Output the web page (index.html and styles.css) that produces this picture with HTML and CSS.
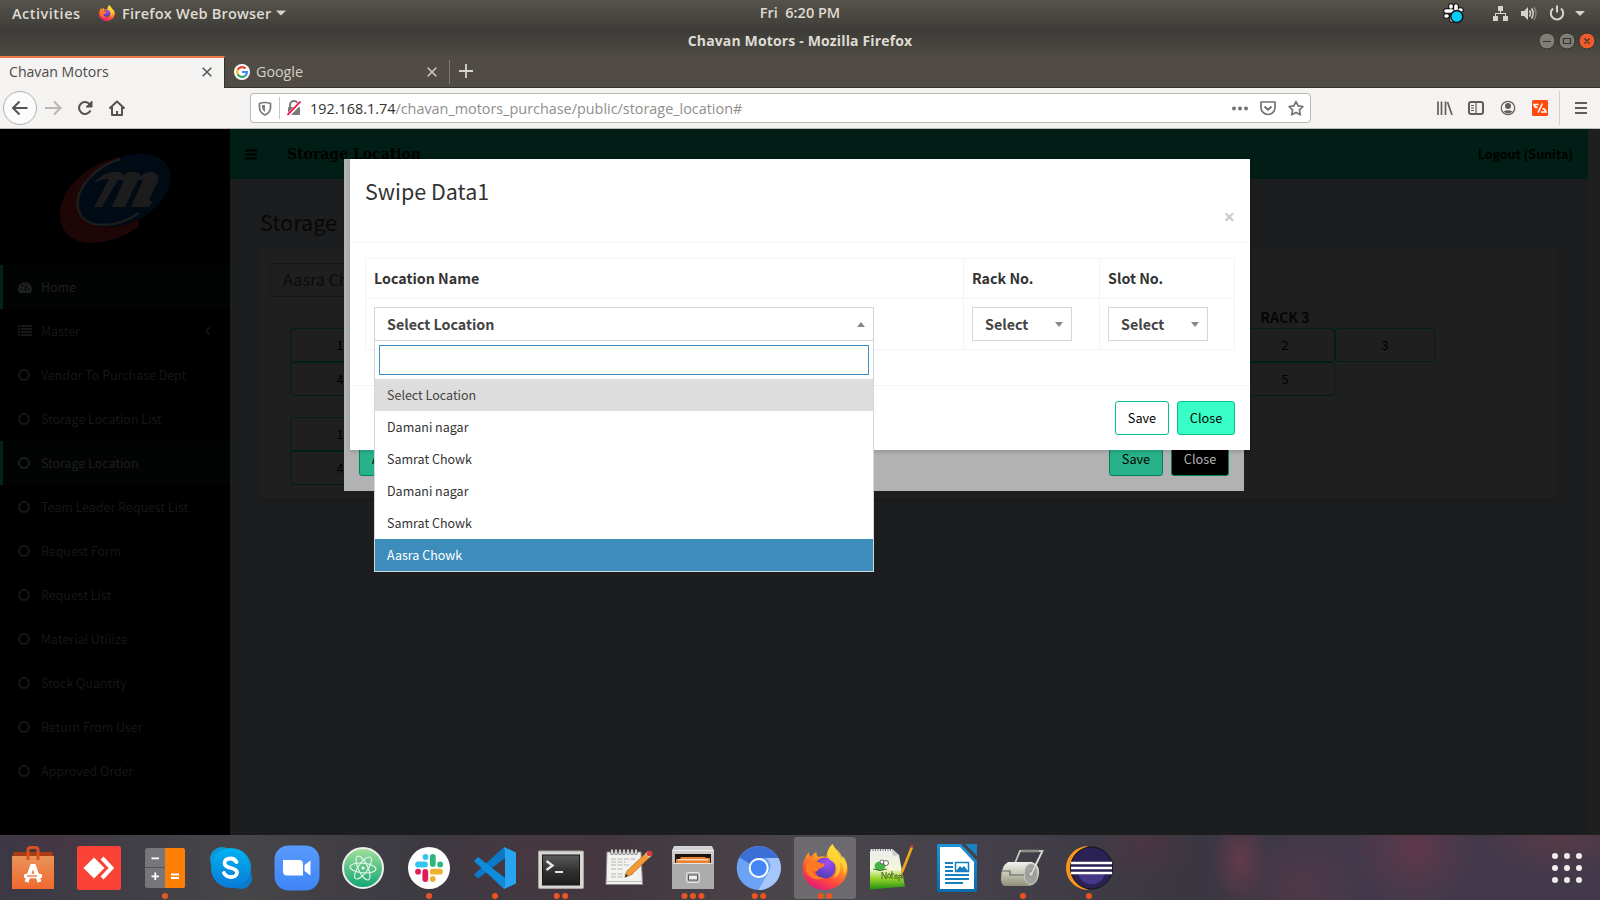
FILE: index.html
```html
<!DOCTYPE html>
<html lang="en">
<head>
<meta charset="utf-8">
<title>Chavan Motors</title>
<link rel="stylesheet" href="styles.css">
</head>
<body>
<svg class="defs" width="0" height="0">
  <defs>
    <linearGradient id="fx" x1=".8" y1="0" x2=".3" y2="1"><stop offset="0" stop-color="#fff04a"/><stop offset=".4" stop-color="#ff9a1f"/><stop offset=".72" stop-color="#ff4a3c"/><stop offset="1" stop-color="#e0177d"/></linearGradient>
    <radialGradient id="fxp" cx=".6" cy=".25" r=".8"><stop offset="0" stop-color="#a44af5"/><stop offset="1" stop-color="#4a3fb0"/></radialGradient>
    <linearGradient id="bag" x1="0" y1="0" x2="0" y2="1"><stop offset="0" stop-color="#e8935a"/><stop offset="1" stop-color="#f0692d"/></linearGradient>
    <linearGradient id="sky" x1="0" y1="0" x2="0" y2="1"><stop offset="0" stop-color="#00b4f0"/><stop offset="1" stop-color="#0a7ad8"/></linearGradient>
    <linearGradient id="zoomg" x1="0" y1="0" x2="0" y2="1"><stop offset="0" stop-color="#589bfd"/><stop offset="1" stop-color="#3f85f5"/></linearGradient>
    <linearGradient id="atom" x1="0" y1="0" x2="0" y2="1"><stop offset="0" stop-color="#a3e09b"/><stop offset="1" stop-color="#0fa573"/></linearGradient>
    <linearGradient id="term" x1="0" y1="0" x2="0" y2="1"><stop offset="0" stop-color="#5a5a5a"/><stop offset=".5" stop-color="#333"/><stop offset="1" stop-color="#1d1d1d"/></linearGradient>
    <linearGradient id="metal" x1="0" y1="0" x2="0" y2="1"><stop offset="0" stop-color="#d6d6d6"/><stop offset="1" stop-color="#9c9c9c"/></linearGradient>
    <linearGradient id="grass" x1="0" y1="0" x2="0" y2="1"><stop offset="0" stop-color="#e9ecef"/><stop offset=".5" stop-color="#f4f7d8"/><stop offset=".72" stop-color="#9bd52c"/><stop offset="1" stop-color="#1f8f12"/></linearGradient>
    <linearGradient id="wri" x1="0" y1="0" x2="0" y2="1"><stop offset="0" stop-color="#1f93d6"/><stop offset="1" stop-color="#0a6cab"/></linearGradient>
    <linearGradient id="roll" x1="0" y1="0" x2="0" y2="1"><stop offset="0" stop-color="#f2f2ee"/><stop offset=".5" stop-color="#c3c4b4"/><stop offset="1" stop-color="#8d8f78"/></linearGradient>
    <symbol id="firefox" viewBox="0 0 46 46">
      <path d="M30 0c-4 4-6 8-6 13-3-1-6-1-8 0-2-1-2-3-2-5-3 1-4 3-5 5C7 12 6 10 6.500 8 3 12 0 18 0 25c0 12 10 21 22 21s23-9 23-21c0-5-2-10-5-13 0 2 0 3-1 4C37 9 32 5 30 0z" fill="url(#fx)"/>
      <circle cx="22.500" cy="24" r="10.500" fill="url(#fxp)"/>
      <path d="M5 18c4-2 10-1 13 1 2 1 4 0 4 1 0 3-4 4-6 5-1 3-3 3-6 2 2 5 8 7 12 7-8 4-18-1-19-9 0-3 1-5 2-7z" fill="#ff7a22"/>
      <path d="M30 0c-6 6-7 14-1 17 7 4 6 12 2 17 7-3 9-12 5-17 4 3 6 8 5 14 6-8 3-15-2-19-1-5-7-7-9-12z" fill="#ffd93a" opacity=".75"/>
    </symbol>
    <symbol id="ring" viewBox="0 0 14 14"><circle cx="6" cy="7" r="5" fill="none" stroke="currentColor" stroke-width="2"/></symbol>
  </defs>
</svg>

<div class="screen">
  <header class="topbar">
    <div class="top-left">
      <span class="activities">Activities</span>
      <svg class="fxmini" viewBox="0 0 46 46"><use href="#firefox"/></svg>
      <span class="appname">Firefox Web Browser</span>
      <svg width="10" height="6"><path d="M0 .5h10L5 5.500z" fill="#d5d3cd"/></svg>
    </div>
    <div class="clock">Fri&nbsp; 6:20 PM</div>
    <svg class="tray" width="160" height="28" viewBox="1440 0 160 28">
      <g stroke="#111" stroke-width="5.500" stroke-linecap="round"><path d="M1451 6v1M1456 6v5M1446 11h6M1446 16h1M1452 16v4M1460 10h1"/></g>
      <g stroke="#fff" stroke-width="3.600" stroke-linecap="round"><path d="M1451 6v1M1456 6v5M1446 11h6M1446 16h1M1452 16v4M1460 10h1"/></g>
      <circle cx="1456.800" cy="16.500" r="6" fill="#00cdf5" stroke="#111" stroke-width="1.500"/>
      <g fill="#d5d3cd"><path d="M1498 6h5v5h-5zM1493 16h5v5h-5zM1503 16h5v5h-5z"/><path d="M1500 11h1v2h5v3h-1v-2h-9v2h-1v-3h5z"/>
      <path d="M1521 11h3l4-4v13l-4-4h-3z"/><path d="M1575 11h10l-5 5z"/></g>
      <g fill="none" stroke="#d5d3cd" stroke-width="1.600"><path d="M1529.500 10.500q2 3 0 6M1531.500 8.500q3.500 5 0 10"/><path d="M1534 7q4 6.500 0 13" opacity=".4"/><path d="M1553 8.500a6.200 6.200 0 1 0 8 0" stroke-width="2"/><path d="M1557 5.500v7" stroke-width="2"/></g>
    </svg>
  </header>

  <div class="titlebar">
    <span class="title">Chavan Motors - Mozilla Firefox</span>
    <svg class="winbtns" width="60" height="20" viewBox="1538 31 60 20">
      <g stroke="#35332e" stroke-width="1"><circle cx="1547" cy="41" r="8" fill="#7f7d76"/><circle cx="1567" cy="41" r="8" fill="#7f7d76"/><circle cx="1587" cy="41" r="8" fill="#ec5b2e"/></g>
      <path d="M1543 41.500h8M1563.500 38.500h7v5h-7zM1584.500 38.500l5 5m0-5l-5 5" fill="none" stroke="#35332e" stroke-width="1.200"/>
    </svg>
  </div>

  <div class="tabs">
    <div class="tab active"><span>Chavan Motors</span><svg width="10" height="10"><path d="M.7.7l8.600 8.600M9.300.7L.7 9.300" stroke="#555" stroke-width="1.500"/></svg></div>
    <div class="tab">
      <svg width="16" height="16" viewBox="0 0 16 16"><circle cx="8" cy="8" r="8" fill="#fff"/><g fill="none" stroke-width="2.200"><path d="M11.600 4.600A4.900 4.900 0 0 0 3.700 5.700" stroke="#ea4335"/><path d="M3.700 5.700a5 5 0 0 0 0 4.600" stroke="#fbbc05"/><path d="M3.700 10.300a4.900 4.900 0 0 0 7.400 1.500" stroke="#34a853"/><path d="M11.100 11.800A5 5 0 0 0 12.900 8H8" stroke="#4285f4"/></g></svg>
      <span class="grow">Google</span><svg width="10" height="10"><path d="M.7.7l8.600 8.600M9.300.7L.7 9.300" stroke="#cfccc4" stroke-width="1.500"/></svg></div>
    <div class="newtab"><svg width="14" height="14"><path d="M7 0v14M0 7h14" stroke="#d8d5ce" stroke-width="1.800"/></svg></div>
  </div>

  <div class="toolbar">
    <svg class="nav" width="140" height="40" viewBox="0 88 140 40">
      <circle cx="20" cy="108" r="16.500" fill="#fcfcfc" stroke="#b2afab"/>
      <g fill="none" stroke="#555350" stroke-width="2"><path d="M27.500 108h-14M19.500 101.500l-6.500 6.500 6.500 6.500"/><path d="M45 108h14M54 101.500l6.500 6.500-6.500 6.500" stroke="#b9b7b4"/><path d="M90 104.500a6 6 0 1 0 .5 6" /><path d="M92 101v6h-6z" fill="#555350" stroke-width="1"/><path d="M109.500 108.500l7.500-7 7.500 7M112 107v8h10v-8M117 115v-4" stroke-linejoin="round"/></g>
    </svg>
    <div class="urlbar">
      <svg width="52" height="28" viewBox="251 94 52 28"><path d="M259.500 103.500q5.500-2 11 0v4q0 5-5.500 7.500-5.500-2.500-5.500-7.500z" fill="none" stroke="#7c7a78" stroke-width="1.700"/><path d="M265 105v7q-3-2-3-5v-2z" fill="#7c7a78"/><path d="M279.500 97v22" stroke="#c9c7c5"/><path d="M290 107v-2a4 4 0 0 1 8 0v2" fill="none" stroke="#7c7a78" stroke-width="2"/><rect x="288" y="107" width="12" height="8" rx="1" fill="#7c7a78"/><path d="M288 115.500L301 102" stroke="#fff" stroke-width="3.500"/><path d="M287.500 115L300.500 101.500" stroke="#ff0039" stroke-width="1.800"/></svg>
      <span class="url"><b>192.168.1.74</b><i>/chavan_motors_purchase/public/storage_location#</i></span>
      <svg class="urlicons" width="80" height="28" viewBox="1228 94 80 28"><g fill="#757370"><circle cx="1234" cy="108.500" r="2"/><circle cx="1240" cy="108.500" r="2"/><circle cx="1246" cy="108.500" r="2"/></g><g fill="none" stroke="#757370" stroke-width="1.700" stroke-linejoin="round"><path d="M1261 102h14v5.500a7 7 0 0 1-14 0z"/><path d="M1264.500 106.500l3.500 3.300 3.500-3.300" stroke-width="2"/><path d="M1296 101.500l2.100 4.400 4.900.6-3.600 3.400.9 4.900-4.300-2.400-4.300 2.400.9-4.900-3.600-3.400 4.900-.6z"/></g></svg>
    </div>
    <svg class="tools" width="170" height="40" viewBox="1430 88 170 40"><g fill="none" stroke="#605e5b" stroke-width="2"><path d="M1438 101.500v13.500M1441.500 101.500v13.500M1445.500 101.500v13.500M1447.500 102l4.500 13" stroke-width="1.700"/><rect x="1469" y="102" width="14" height="12" rx="2"/><path d="M1476 102v12M1471 105.500h3M1471 108h3M1471 110.500h3" stroke-width="1.200"/><circle cx="1508" cy="108" r="6.700" stroke-width="1.200"/><path d="M1575 103h12M1575 108h12M1575 113h12"/></g><circle cx="1508" cy="106" r="3" fill="#605e5b"/><path d="M1503.500 111.500q4.500-2.500 9 0-4.500 4-9 0z" fill="#605e5b"/><rect x="1532" y="100" width="16" height="16" rx="1.500" fill="#ff4a0d"/><path d="M1538.500 104.500h-4.500q.5 3 3.500 3M1542.500 103.500l-4.500 9M1541 112h5q-.5-3-3.500-3.500" fill="none" stroke="#fff" stroke-width="1.600"/><path d="M1559.500 91v34" stroke="#d3d1cf"/></svg>
  </div>

  <main class="page">
    <aside class="sidebar">
      <svg class="logo" width="230" height="136" viewBox="0 129 230 136">
        <path d="M120 157C90 162 60 188 60 214c0 20 15 30 34 29 18-1 36-9 45-17v-12c-15 13-44 20-55 4-11-19 8-49 36-56z" fill="#1e0506"/>
        <ellipse cx="125" cy="190.500" rx="49" ry="32" transform="rotate(-29 125 190.500)" fill="#000b16"/>
        <path d="M120 159c-27 8-46 32-42 50 5 20 36 21 61 4" fill="none" stroke="#1c1c1c" stroke-width="2.500"/>
        <path d="M94 183q8-10 19-11 9-2 10 4 6-5 12-4 6 1 5 5 5-5 11-5 9 1 7 9l-9 18q0 3 4 2l-4 6h-18l12-27h-5l-13 27h-13l12-27h-6l-16 27H94l15-28q-8 0-15 4z" fill="#1c1c1c"/>
      </svg>
      <nav>
        <a class="on"><svg viewBox="0 0 14 14"><path d="M1.200 13a7 7 0 1 1 11.600 0z" fill="currentColor"/><path d="M7 10.500l1.500-5M2.500 9h1M10.500 9h1M3.700 5l1 1M7 3v1" stroke="#000" stroke-width="1.300"/></svg><span>Home</span></a>
        <a><svg viewBox="0 0 14 14"><path d="M0 2h2M3 2H14M0 5h2M3 5H14M0 8h2M3 8H14M0 11h2M3 11H14" stroke="currentColor" stroke-width="2"/></svg><span>Master</span><svg class="chev" viewBox="0 0 6 10"><path d="M5 1L1 5l4 4" fill="none" stroke="currentColor" stroke-width="1.300"/></svg></a>
        <a><svg><use href="#ring"/></svg><span>Vendor To Purchase Dept</span></a>
        <a><svg><use href="#ring"/></svg><span>Storage Location List</span></a>
        <a class="on"><svg><use href="#ring"/></svg><span>Storage Location</span></a>
        <a><svg><use href="#ring"/></svg><span>Team Leader Request List</span></a>
        <a><svg><use href="#ring"/></svg><span>Request Form</span></a>
        <a><svg><use href="#ring"/></svg><span>Request List</span></a>
        <a><svg><use href="#ring"/></svg><span>Material Utilize</span></a>
        <a><svg><use href="#ring"/></svg><span>Stock Quantity</span></a>
        <a><svg><use href="#ring"/></svg><span>Return From User</span></a>
        <a><svg><use href="#ring"/></svg><span>Approved Order</span></a>
      </nav>
    </aside>
    <section class="main">
      <div class="appbar"><svg width="12" height="11"><path d="M0 1.500h12M0 5.500h12M0 9.500h12" stroke="#000" stroke-width="2"/></svg><span class="crumb">Storage Location</span><span class="logout">Logout (Sunita)</span></div>
      <h1>Storage Location</h1>
      <div class="box">
        <div class="locsel">Aasra Chowk</div>
        <div class="racks">
          <div class="rack first">
            <div class="rackname">&nbsp;</div>
            <div class="cells"><span>1</span></div><div class="cells"><span>4</span></div>
            <div class="cells gap"><span>1</span></div><div class="cells"><span>4</span></div>
          </div>
          <div class="rack">
            <div class="rackname">RACK 3</div>
            <div class="cells"><span>2</span><span>3</span></div><div class="cells"><span>5</span></div>
          </div>
        </div>
      </div>
    </section>

    <div class="modal back">
      <div class="bfoot"><button class="btn green add">A</button><span class="grow"></span><button class="btn green save">Save</button><button class="btn black">Close</button></div>
    </div>
    <div class="modal front">
      <div class="mhead"><h2>Swipe Data1</h2><span class="x">×</span></div>
      <div class="mbody">
        <div class="table">
          <div class="th">Location Name</div><div class="th">Rack No.</div><div class="th">Slot No.</div>
          <div class="td"><div class="select wide"><span>Select Location</span><i class="up"></i></div></div>
          <div class="td"><div class="select"><span>Select</span><i></i></div></div>
          <div class="td"><div class="select"><span>Select</span><i></i></div></div>
        </div>
      </div>
      <div class="mfoot"><button class="btn white save">Save</button><button class="btn mint">Close</button></div>
      <div class="dropdown">
        <div class="search"></div>
        <div class="opt selected">Select Location</div>
        <div class="opt">Damani nagar</div>
        <div class="opt">Samrat Chowk</div>
        <div class="opt">Damani nagar</div>
        <div class="opt">Samrat Chowk</div>
        <div class="opt hl">Aasra Chowk</div>
      </div>
    </div>
  </main>

  <footer class="dock">
    <svg viewBox="0 0 66 65"><path d="M14 17h38l2 5H12z" fill="#a83c12"/><path d="M12 21h42v33H12z" fill="url(#bag)"/><path d="M28 25V15q0-2.500 3-2.500h4q3 0 3 2.500v10" fill="none" stroke="#d9511f" stroke-width="3"/><path d="M26.500 47L32 31h2l5.500 16" fill="none" stroke="#fff" stroke-width="4"/><path d="M26 41h14" stroke="#fff" stroke-width="4.500" stroke-linecap="round"/><path d="M27 41h10" stroke="#f0692d" stroke-width="1.300"/></svg>
    <svg viewBox="0 0 66 65"><rect x="11" y="11" width="44" height="44" rx="2.500" fill="#fb4237"/><path d="M17.500 33L28 22.500 38.500 33 28 43.500z" fill="#fff"/><path d="M36 23l9.500 10L36 43" fill="none" stroke="#fff" stroke-width="4"/></svg>
    <svg viewBox="0 0 66 65"><rect x="13" y="13" width="40" height="40" rx="2.500" fill="#77777a"/><path d="M33 13h17.500a2.500 2.500 0 0 1 2.500 2.500v35a2.500 2.500 0 0 1-2.500 2.500H33z" fill="#ff7f05"/><path d="M13 32.500h20" stroke="#55555a"/><path d="M19.500 23.300h7.500M19.500 41.300h7.500M23.300 37.500v7.500M39 39.500h8M39 43h8" stroke="#fff" stroke-width="1.800"/><circle cx="33" cy="61" r="3" fill="#e95420"/></svg>
    <svg viewBox="0 0 66 65"><circle cx="24" cy="24" r="12" fill="#0c96d8"/><circle cx="43" cy="43" r="11" fill="#0a7cc9"/><circle cx="33" cy="33" r="20" fill="url(#sky)"/><path d="M38.500 27q-2-3.500-6-3.500c-4 0-6 2-6 4.500 0 6.500 12.500 3.500 12.500 9.500 0 3-3 4.500-6 4.500q-5 0-7-4" fill="none" stroke="#fff" stroke-width="3.800" stroke-linecap="round"/></svg>
    <svg viewBox="0 0 66 65"><rect x="10.500" y="10.500" width="45" height="45" rx="14" fill="url(#zoomg)"/><path d="M19 25h16q4 0 4 4v11.500H23q-4 0-4-4zM40.500 30l6-4.500v15l-6-4.500z" fill="#fff"/></svg>
    <svg viewBox="0 0 66 65"><circle cx="33" cy="33" r="20" fill="url(#atom)" stroke="#efefef" stroke-width="2"/><g fill="none" stroke="#e9f7ee" stroke-width="1.100"><ellipse cx="33" cy="33" rx="13" ry="4.800" transform="rotate(5 33 33)"/><ellipse cx="33" cy="33" rx="13" ry="4.800" transform="rotate(65 33 33)"/><ellipse cx="33" cy="33" rx="13" ry="4.800" transform="rotate(125 33 33)"/></g><circle cx="33" cy="33" r="1.500" fill="#fff"/></svg>
    <svg viewBox="0 0 66 65"><circle cx="33" cy="33" r="21" fill="#fff"/><g stroke-width="5.800" stroke-linecap="round"><path d="M29.500 22v.1M22 29.500h7" stroke="#36c5f0"/><path d="M36.800 22v7M44.200 29.500h-.1" stroke="#2eb67d"/><path d="M44 36.700h-7.200M36.800 44v-.1" stroke="#ecb22e"/><path d="M29.300 44v-7M22 36.700h.1" stroke="#e01e5a"/></g><circle cx="33" cy="61" r="3" fill="#e95420"/></svg>
    <svg viewBox="0 0 66 65"><path d="M42 12L12 39.500l4 4L43 23z" fill="#0b79c8"/><path d="M42 54L12 26l4-4 27 21z" fill="#0d8ddb"/><path d="M42 12l12 5.500v31L42 54l1-10V22z" fill="#27a5f3"/><circle cx="33" cy="61" r="3" fill="#e95420"/></svg>
    <svg viewBox="0 0 66 65"><rect x="10.500" y="16" width="45" height="37.500" rx="1" fill="#d7d7d3" stroke="#a5a5a2"/><rect x="14.500" y="20" width="37" height="30" fill="url(#term)" stroke="#181818"/><path d="M18.500 26l6 4.500-6 4.500" fill="none" stroke="#e5e5e5" stroke-width="2.500"/><path d="M27 37h8" stroke="#e5e5e5" stroke-width="2"/><circle cx="28.700" cy="61" r="3" fill="#e95420"/><circle cx="37.200" cy="61" r="3" fill="#e95420"/></svg>
    <svg viewBox="0 0 66 65"><path d="M13 17h34l1.500 32.500H12z" fill="#f2f2f0" stroke="#8e8e8b" stroke-width="1"/><path d="M12 46.500h36" stroke="#bdbdb9"/><path d="M18 15.500v3M22 15.500v3M26 15.500v3M30 15.500v3M34 15.500v3M38 15.500v3M42 15.500v3" stroke="#444" stroke-width="3" stroke-linecap="round"/><path d="M18 14.500v5M22 14.500v5M26 14.500v5M30 14.500v5M34 14.500v5M38 14.500v5M42 14.500v5" stroke="#f2f2f2" stroke-width="1.600"/><path d="M17 24h24M17 27h15M17 30h20M17 34h12M17 39h22M17 42h16" stroke="#b4b4b4" stroke-dasharray="5 1.500"/><path d="M33 36l20-19 4 4-20 19-6 2z" fill="#f19a36" stroke="#b4651c" stroke-width=".7"/><path d="M51 19l3-3 4 4-3 3z" fill="#c9c9c9"/><circle cx="55.500" cy="18.500" r="2.800" fill="#e23a3a"/><path d="M31 42l1-3 2 2z" fill="#222"/></svg>
    <svg viewBox="0 0 66 65"><path d="M14 11h38l2 4.500v38.500H12V15.500z" fill="url(#metal)"/><path d="M12.500 15.500h41" stroke="#eee" stroke-width="1"/><rect x="15" y="19" width="36" height="10" fill="#1f1510"/><path d="M16 29v-5h4l1-2h24l1 1h4v6z" fill="#e9802c"/><path d="M18 24.800h30" stroke="#fff" stroke-width="1"/><path d="M12 28h42v26H12z" fill="#acacac"/><path d="M13 28.500h40" stroke="#e4e4e4"/><rect x="26.500" y="37.500" width="13" height="10" rx="1.500" fill="#b7b7b7" stroke="#e2e2e2"/><rect x="28.500" y="40" width="9" height="5" fill="#eee" stroke="#555"/><g fill="#e95420"><circle cx="24.500" cy="61" r="3"/><circle cx="33" cy="61" r="3"/><circle cx="41.500" cy="61" r="3"/></g></svg>
    <svg viewBox="0 0 66 65"><circle cx="32.700" cy="33" r="22" fill="#6da3f5"/><path d="M13.500 22.500A22 22 0 0 1 53.700 26.500L52.500 23H33a10 10 0 0 0-9 6z" fill="#3c6fd6"/><path d="M52.500 23a22 22 0 0 1-20 32l9.500-17a10 10 0 0 0-2-15z" fill="#a4c6fb"/><circle cx="32.700" cy="33" r="10" fill="#fff"/><circle cx="32.700" cy="33" r="8" fill="#4487f5"/><circle cx="28.700" cy="61" r="3" fill="#e95420"/><circle cx="37.200" cy="61" r="3" fill="#e95420"/></svg>
    <svg viewBox="0 0 66 65"><rect x="2" y="2" width="62" height="62" rx="3" fill="#fff" opacity=".2"/><use href="#firefox" x="10.500" y="9" width="46" height="46"/><circle cx="28.700" cy="61" r="3" fill="#e95420"/><circle cx="37.200" cy="61" r="3" fill="#e95420"/></svg>
    <svg viewBox="0 0 66 65"><path d="M12 14h22l7 6 6 31.500L12 54.500z" fill="url(#grass)"/><path d="M34 14l7 6-6 1z" fill="#c9cdd0"/><path d="M12 15h22" stroke="#777" stroke-width="2" stroke-dasharray="1 1.500"/><ellipse cx="22" cy="31" rx="5.500" ry="4.500" fill="#45b54a"/><circle cx="24" cy="27" r="2" fill="#fff" stroke="#333" stroke-width=".7"/><circle cx="28" cy="28" r="2.500" fill="#fff" stroke="#333" stroke-width=".7"/><path d="M15 34q7 3 14 0M24 44v-7l4 7v-7M30 43q-1-5 2-4 2 4-1 4M34 36v8M33 39h3M37 44v-4h2v4M41 46v-6l3 1-2 2M44 38v6" fill="none" stroke="#3b5a1d" stroke-width=".9"/><path d="M43 36l9.500-24 2.500 1-9.500 24-3 3z" fill="#f2a51d"/><path d="M52.500 12l.8-2.500 2.200 1-.5 2.500z" fill="#d83b3b"/></svg>
    <svg viewBox="0 0 66 65"><path d="M15 9h22l16 17v29q0 2-2 2H15q-2 0-2-2V11q0-2 2-2z" fill="url(#wri)"/><path d="M16 12h20l14 15v27H16z" fill="#fff"/><path d="M41 9h12v12z" fill="#1a82c3"/><path d="M21 28h8M21 32h8M21 36h8M21 40h24M21 44h24M21 48h18" stroke="#1580bd" stroke-width="2"/><rect x="31.500" y="27.500" width="13" height="9" fill="none" stroke="#1580bd" stroke-width="1.500"/><path d="M32 36l4-5 2 2 2-2 4 5z" fill="#1580bd"/></svg>
    <svg viewBox="0 0 66 65"><path d="M25 28l5-12h22.500L43 35" fill="none" stroke="#c8c9bd" stroke-width="1.800"/><path d="M31 16h18" stroke="#8e8f85" stroke-width="2.600"/><path d="M18 27h24q8 3 7 12t-9 12H15q-4-1-4-7 0-13 7-17z" fill="url(#roll)"/><ellipse cx="41" cy="39" rx="7" ry="10.500" fill="#a2a19d" stroke="#cfcfca"/><circle cx="41" cy="39" r="2.500" fill="#d3d3cf" stroke="#888"/><path d="M52 17L42 38" stroke="#dedfd8" stroke-width="1.500"/><path d="M11 36h9v4h14" fill="none" stroke="#63645a" stroke-width="1.200"/><circle cx="33" cy="61" r="3" fill="#e95420"/></svg>
    <svg viewBox="0 0 66 65"><path d="M32 11a22 22 0 0 0 0 44A26 26 0 0 1 32 11z" fill="#f7941e"/><circle cx="35.500" cy="33" r="21" fill="#2a2254" stroke="#111"/><path d="M22 39h27a14 14 0 0 1-27 0z" fill="#473788"/><path d="M15 28h41M15 33h41M15 38h41" stroke="#fff" stroke-width="2.400"/><circle cx="33" cy="61" r="3" fill="#e95420"/></svg>
    <svg class="apps" viewBox="0 0 66 65"><g fill="#f0eeed"><circle cx="21" cy="21" r="3"/><circle cx="33" cy="21" r="3"/><circle cx="45" cy="21" r="3"/><circle cx="21" cy="33" r="3"/><circle cx="33" cy="33" r="3"/><circle cx="45" cy="33" r="3"/><circle cx="21" cy="45" r="3"/><circle cx="33" cy="45" r="3"/><circle cx="45" cy="45" r="3"/></g></svg>
  </footer>
</div>
</body>
</html>
```
FILE: styles.css
```css
* { box-sizing: border-box; }
body { margin: 0; background: #000; font-family: "Noto Sans CJK JP", "Noto Sans", sans-serif; }
svg { display: block; flex: none; }
.defs { position: absolute; }
.grow { flex: 1; }
.screen { width: 1600px; height: 900px; overflow: hidden; display: flex; flex-direction: column; }

/* desktop bar and window frame */
.topbar, .titlebar, .tabs, .toolbar { font-family: "Open Sans", "Noto Sans", sans-serif; flex: none; }
.topbar { height: 28px; display: grid; grid-template-columns: 1fr auto 1fr; align-items: center; background: linear-gradient(#57534b, #3f3e39); color: #dfdbd2; font-size: 14.500px; font-weight: 600; }
.top-left { display: flex; align-items: center; padding-left: 12px; white-space: nowrap; padding-bottom: 2px; }
.activities { width: 87px; letter-spacing: .5px; }
.fxmini { width: 16px; height: 16px; margin-right: 7px; }
.appname { width: 154px; letter-spacing: .22px; }
.clock { line-height: 26px; height: 28px; }
.tray { justify-self: end; }
.titlebar { height: 28px; display: flex; align-items: center; justify-content: center; position: relative; background: linear-gradient(#3b3a36, #4e4b44); color: #dfdbd2; font-weight: 700; font-size: 14px; }
.title { line-height: 26px; margin-top: -3px; letter-spacing: .15px; }
.winbtns { position: absolute; right: 2px; top: 3px; }
.tabs { height: 32px; display: flex; background: #504c45; border-bottom: 1px solid #33312d; }
.tab { width: 225px; display: flex; align-items: center; justify-content: space-between; padding: 0 12px 0 9px; color: #d5d1c8; font-size: 14.300px; gap: 6px; border-right: 1px solid #504c45; }
.tab.active { height: 32px; background: #f4f3f2; border-top: 2px solid #f0774a; border-right: 1px solid #33312d; color: #4c4a47; font-size: 14.100px; padding-bottom: 2px; }
.tab.active span { padding-bottom: 2px; }
.tab:nth-child(2) { width: 224px; padding-right: 11px; }
.newtab { display: flex; align-items: center; padding-left: 9px; border-left: 1px solid #7b7770; height: 24px; margin-top: 4px; padding-bottom: 2px; }
.toolbar { height: 41px; background: #f4f3f2; border-bottom: 1px solid #bdbab6; display: flex; align-items: center; }
.nav { margin-right: 110px; }
.urlbar { width: 1061px; height: 30px; background: #fff; border: 1px solid #bab7b3; border-radius: 4px; display: flex; align-items: center; padding-right: 2px; }
.url { flex: 1; padding-left: 7px; font-size: 14.400px; white-space: nowrap; }
.url b { font-weight: 400; color: #333; }
.url i { font-style: normal; color: #908e8b; }
.tools { margin-left: auto; }

/* dimmed application */
.page { height: 706px; flex: none; display: flex; position: relative; background: #1f1f1f; }
.sidebar { width: 230px; background: #000; color: #151718; font-size: 12.450px; }
nav a { height: 44px; display: flex; align-items: center; padding-left: 15px; border-left: 3px solid #000; }
nav a span { line-height: 20px; }
nav a svg { width: 14px; height: 14px; margin-right: 9px; }
nav a .chev { width: 6px; height: 10px; margin: 0 19px 0 auto; }
nav a.on { background: #020403; border-left-color: #06231a; color: #1e1f1f; }
.main { width: 1358px; background: #1c1d1f; color: #060606; }
.appbar { height: 50px; background: #001e16; display: flex; align-items: center; padding: 0 15px; color: #000; }
.crumb { font: bold 14px "DejaVu Serif", serif; margin-left: 30px; }
.logout { font-size: 12.500px; font-weight: 700; margin-left: auto; padding-bottom: 1px; }
h1 { font-size: 21.600px; line-height: 32px; font-weight: 400; margin: 27px 0 12px 30px; color: #070707; }
.box { margin-left: 30px; width: 1298px; height: 249px; background: #1f1f1f; padding: 13px 10px; border-radius: 3px; box-shadow: 0 1px 1px #191a1b; }
.locsel { width: 240px; height: 34px; border: 1px solid #171717; padding-left: 12px; line-height: 31px; font-size: 16.200px; color: #0b0b0b; }
.racks { display: flex; gap: 845px; padding: 10px 20px; }
.rackname { height: 21px; line-height: 19px; width: 100px; text-align: center; font-weight: 700; font-size: 14.300px; }
.cells { display: flex; }
.cells.gap { margin-top: 21px; }
.cells span { width: 100px; height: 34px; flex: none; border: 1px solid #001f16; border-radius: 3px; text-align: center; line-height: 31px; font-size: 12.500px; color: #000; }
.rack.first { width: 100px; }

/* dialogs lie over the page */
.modal { position: absolute; }
.back { left: 344px; top: 30px; width: 900px; height: 332px; background: #b2b2b2; display: flex; align-items: flex-end; }
.bfoot { display: flex; flex: 1; padding: 15px; }
.front { left: 350px; top: 30px; width: 900px; height: 291px; background: #fff; box-shadow: 0 2px 4px rgba(0,0,0,.15); color: #333; }
.btn { height: 34px; padding: 0; width: 58px; border: 1px solid #00c292; border-radius: 3px; font: 12.700px/30px "Noto Sans CJK JP", "Noto Sans", sans-serif; color: #000; }
.btn.save { width: 54px; margin-right: 8px; }
.btn.add { width: 50px; text-align: left; padding-left: 12px; }
.btn.green { background: #27b28a; border-color: #00805f; }
.btn.black { background: #000; border-color: #00805f; color: #b2b2b2; }
.btn.white { background: #fff; }
.btn.mint { background: #39ffc6; }
.mhead { height: 84px; padding: 15px; border-bottom: 1px solid #f4f4f4; }
h2 { margin: 0 0 1px; font-size: 21.500px; line-height: 34px; font-weight: 400; }
.x { display: block; text-align: right; font: 700 20px/16px "Open Sans", sans-serif; color: #ccc; }
.mbody { padding: 15px; height: 143px; border-bottom: 1px solid #f4f4f4; }
.table { display: grid; grid-template-columns: 598px 136px 135px; grid-template-rows: 40px 51px; border-top: 1px solid #f4f4f4; border-left: 1px solid #f4f4f4; }
.th, .td { border-right: 1px solid #f4f4f4; border-bottom: 1px solid #f4f4f4; padding: 8px; font-weight: 700; font-size: 14.280px; }
.th { line-height: 21px; }
.select { width: 100px; height: 34px; border: 1px solid #d2d6de; padding: 0 8px 0 12px; display: flex; align-items: center; justify-content: space-between; color: #444; }
.select span { padding-bottom: 2px; }
.select.wide { width: 500px; }
.select i { border: 4px solid transparent; border-top: 5px solid #888; border-bottom: 0; }
.select i.up { border-top: 0; border-bottom: 5px solid #888; }
.mfoot { display: flex; justify-content: flex-end; padding: 15px; }
.dropdown { position: absolute; left: 24px; top: 181px; width: 500px; border: 1px solid #d2d6de; background: #fff; font-size: 12.500px; }
.search { height: 30px; margin: 4px; border: 1px solid #3c8dbc; }
.opt { height: 32px; line-height: 31px; padding-left: 12px; }
.opt.selected { background: #ddd; color: #444; }
.opt.hl { background: #3c8dbc; color: #fff; }

.dock { height: 65px; flex: none; display: flex; background:
  radial-gradient(ellipse 28px 45px at 1240px 25px, rgba(122,60,76,.65), transparent),
  radial-gradient(ellipse 60px 60px at 1415px 12px, rgba(112,56,74,.6), transparent),
  radial-gradient(ellipse 60px 50px at 1300px 50px, rgba(96,56,74,.5), transparent),
  radial-gradient(ellipse 80px 35px at 1560px 5px, rgba(100,60,70,.6), transparent),
  radial-gradient(ellipse 50px 40px at 1145px 10px, rgba(88,50,64,.5), transparent),
  radial-gradient(ellipse 120px 50px at 540px 25px, rgba(84,54,64,.4), transparent),
  radial-gradient(ellipse 60px 30px at 60px 5px, rgba(80,48,66,.5), transparent),
  linear-gradient(90deg, #3c3844, #464548 15%, #3d3a42 26%, #42373f 38%, #4a464b 50%, #43404a 62%, #3a3741 74%, #43394a 85%, #42394a); }
.dock svg { width: 66px; height: 65px; }
.dock .apps { margin-left: auto; }
```
